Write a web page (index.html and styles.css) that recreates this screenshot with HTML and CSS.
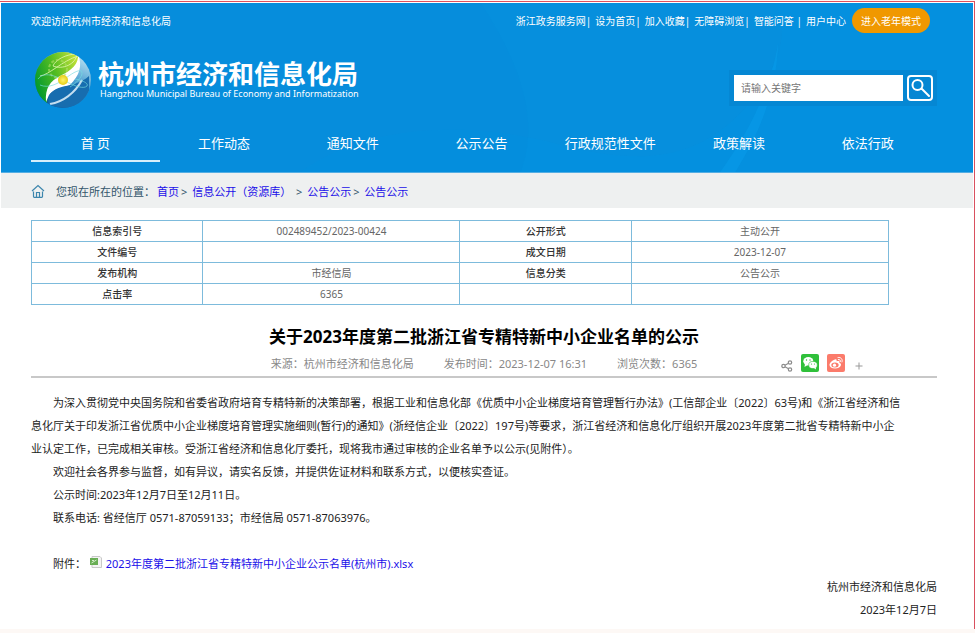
FILE: index.html
```html
<!DOCTYPE html>
<html lang="zh-CN">
<head>
<meta charset="utf-8">
<meta name="viewport" content="width=device-width, initial-scale=1">
<title>关于2023年度第二批浙江省专精特新中小企业名单的公示</title>
<link rel="stylesheet" href="styles.css">
</head>
<body>
<div class="page">
  <header class="header">
    <svg class="waves" viewBox="0 0 973 170" preserveAspectRatio="none" aria-hidden="true">
      <path d="M300 170C370 120 470 120 550 140C640 165 700 160 750 100C780 60 790 30 775 0H973V170Z" fill="#0096e6" opacity=".3"/>
      <path d="M0 0H480C520 60 540 120 520 170H0Z" fill="#058cda" opacity=".3"/>
      <path d="M720 170C745 135 770 90 778 40C776 90 760 130 735 170Z" fill="#0aa0ee" opacity=".4"/>
    </svg>
    <div class="topbar">
      <span>欢迎访问杭州市经济和信息化局</span>
      <div class="toplinks">
        <a href="#">浙江政务服务网</a><span class="bar">|</span>
        <a href="#">设为首页</a><span class="bar">|</span>
        <a href="#">加入收藏</a><span class="bar">|</span>
        <a href="#">无障碍浏览</a><span class="bar">|</span>
        <a href="#">智能问答</a><span class="bar">&nbsp;|</span>
        <a href="#">用户中心</a>
        <button class="elder" type="button">进入老年模式</button>
      </div>
    </div>
    <div class="brandrow">
      <a class="brand" href="#">
        <svg class="logo" viewBox="0 0 56 56" aria-hidden="true">
          <defs>
            <linearGradient id="green" x1="0" y1="0.5" x2="1" y2="0">
              <stop offset="0" stop-color="#079b2c"/><stop offset=".45" stop-color="#55bd22"/><stop offset="1" stop-color="#d5e83c"/>
            </linearGradient>
            <linearGradient id="blue" x1=".8" y1="0" x2=".3" y2="1">
              <stop offset="0" stop-color="#c5e8f6"/><stop offset=".45" stop-color="#4a9fd0"/><stop offset="1" stop-color="#07539b"/>
            </linearGradient>
            <radialGradient id="sun"><stop offset="0" stop-color="#fff36a"/><stop offset="1" stop-color="#e5cd16"/></radialGradient>
            <clipPath id="disc"><circle cx="28" cy="28" r="28"/></clipPath>
          </defs>
          <g clip-path="url(#disc)">
            <rect width="56" height="56" fill="url(#blue)"/>
            <path d="M0 0H43C45 12 38 19 27 25C18 30 12 36 12 54L0 56Z" fill="url(#green)"/>
            <path d="M43 2C48 14 44 24 35 33C28 36 19 36 14 43L11 50C10 36 15 29 25 24C37 18 44 12 43 2Z" fill="#fff"/>
            <path d="M14 44C22 30 38 38 54 24V45L38 57L13 54Z" fill="#176daf"/>
            <path d="M43 4C27 9 14 23 5 24M42 2C31 2 20 8 18 14C28 18 41 12 42 2" fill="none" stroke="#e6f7b4" opacity=".8"/>
            <path d="M15 52C28 50 40 41 47 28" fill="none" stroke="#e3f2fb" stroke-width="2" opacity=".85"/>
            <circle cx="23" cy="17" r="9" fill="none" stroke="#afe066" stroke-width="2" stroke-dasharray="3 2" opacity=".6"/>
            <path d="M3 27C9 19 21 24 30 29C41 35 49 37 52 34C54 31 46 28 40 27M5 33C14 37 24 31 31 26C40 19 46 17 47 20C48 25 40 32 35 35" fill="none" stroke="#77dce0" opacity=".65"/>
            <circle cx="28" cy="28" r="5" fill="url(#sun)"/>
          </g>
        </svg>
        <span class="names">
          <span class="cn">杭州市经济和信息化局</span>
          <span class="en">Hangzhou Municipal Bureau of Economy and Informatization</span>
        </span>
      </a>
      <form class="search">
        <input type="text" placeholder="请输入关键字" aria-label="请输入关键字">
        <button type="button" aria-label="搜索">
          <svg viewBox="0 0 26 26" aria-hidden="true"><rect x="1" y="1" width="24" height="24" rx="3"/><circle cx="10.500" cy="10" r="5"/><path d="M14.500 13.500L22 21" stroke-linecap="round"/></svg>
        </button>
      </form>
    </div>
    <nav class="nav">
      <a class="current" href="#">首 页</a>
      <a href="#">工作动态</a>
      <a href="#">通知文件</a>
      <a href="#">公示公告</a>
      <a href="#">行政规范性文件</a>
      <a href="#">政策解读</a>
      <a href="#">依法行政</a>
    </nav>
  </header>

  <div class="crumbs">
    <svg viewBox="0 0 14 14" aria-hidden="true"><path d="M1 7L7 1.500L13 7M2.500 7.500V12.500Q2.500 13.300 3.300 13.300H10.700Q11.500 13.300 11.500 12.500V7.500M5.500 13V8.500H8.500V13"/></svg>
    <p>您现在所在的位置：<a href="#">首页</a>&gt; <a href="#">信息公开（资源库）</a> &gt; <a href="#">公告公示</a>&gt; <a href="#">公告公示</a></p>
  </div>

  <main class="main">
    <table class="info">
      <colgroup><col class="key"><col class="val"><col class="key"><col class="val"></colgroup>
      <tr><th>信息索引号</th><td>002489452/2023-00424</td><th>公开形式</th><td>主动公开</td></tr>
      <tr><th>文件编号</th><td></td><th>成文日期</th><td>2023-12-07</td></tr>
      <tr><th>发布机构</th><td>市经信局</td><th>信息分类</th><td>公告公示</td></tr>
      <tr><th>点击率</th><td>6365</td><th></th><td></td></tr>
    </table>

    <article>
      <h1>关于2023年度第二批浙江省专精特新中小企业名单的公示</h1>
      <div class="meta">
        <div class="facts">
          <span>来源：杭州市经济和信息化局</span>
          <span>发布时间：2023-12-07 16:31</span>
          <span>浏览次数：6365</span>
        </div>
        <div class="share">
          <svg class="mini" viewBox="0 0 12 12" aria-hidden="true"><g fill="none" stroke="#8c8c8c" stroke-width="1.200"><circle cx="2.500" cy="6" r="1.700"/><circle cx="9" cy="2.500" r="1.700"/><circle cx="9" cy="9.500" r="1.700"/><path d="M4 5.200L7.500 3.300M4 6.800L7.500 8.700"/></g></svg>
          <a href="#" aria-label="微信"><svg viewBox="0 0 18 18" aria-hidden="true"><rect width="18" height="18" rx="2" fill="#2fc03a"/><ellipse cx="7.300" cy="7.300" rx="5" ry="4.200" fill="#fff"/><path d="M4 10L3.500 13L6.500 11Z" fill="#fff"/><ellipse cx="12" cy="11" rx="4.300" ry="3.600" fill="#fff" stroke="#2fc03a" stroke-width=".6"/><path d="M13 14L15 15.500L14.800 13Z" fill="#fff"/><g fill="#2fc03a"><circle cx="5.500" cy="6" r=".7"/><circle cx="9" cy="6" r=".7"/><circle cx="10.500" cy="10" r=".6"/><circle cx="13.500" cy="10" r=".6"/></g></svg></a>
          <a href="#" aria-label="微博"><svg viewBox="0 0 18 18" aria-hidden="true"><rect width="18" height="18" rx="2" fill="#fb7b6b"/><path d="M8 5.500C9.500 5 10 6 9.500 7.300C12 6.400 12.800 7.200 12.200 8.600C16 10 13.500 14.500 8.300 14.500C4.500 14.500 2.500 12.700 2.500 11C2.500 8.500 6 5.800 8 5.500Z" fill="#fff"/><ellipse cx="8" cy="11" rx="3.700" ry="2.500" fill="#fb7b6b"/><circle cx="7.500" cy="11.200" r="1.600" fill="#fff"/><path d="M11 3.500C14 2.800 16 5.500 15 8M11.300 5.500C13 5.200 13.800 6.500 13.300 7.700" fill="none" stroke="#fff" stroke-linecap="round"/></svg></a>
          <svg class="mini" viewBox="0 0 12 12" aria-hidden="true"><path d="M6 2.500V9.500M2.500 6H9.500" stroke="#999" fill="none"/></svg>
        </div>
      </div>
      <div class="content">
        <p>为深入贯彻党中央国务院和省委省政府培育专精特新的决策部署，根据工业和信息化部《优质中小企业梯度培育管理暂行办法》(工信部企业〔2022〕63号)和《浙江省经济和信<br>息化厅关于印发浙江省优质中小企业梯度培育管理实施细则(暂行)的通知》(浙经信企业〔2022〕197号)等要求，浙江省经济和信息化厅组织开展2023年度第二批省专精特新中小企<br>业认定工作，已完成相关审核。受浙江省经济和信息化厅委托，现将我市通过审核的企业名单予以公示(见附件）。</p>
        <p>欢迎社会各界参与监督，如有异议，请实名反馈，并提供佐证材料和联系方式，以便核实查证。</p>
        <p>公示时间:2023年12月7日至12月11日。</p>
        <p>联系电话: 省经信厅 0571-87059133；市经信局 0571-87063976。</p>
        <p class="attach">附件：
          <svg viewBox="0 0 12 12" aria-hidden="true"><path d="M2 .5H10L11.500 2V11.500H2Z" fill="#f4f4f4" stroke="#c9c9c9"/><rect y="2" width="8" height="7" fill="#69ae55"/><path d="M1.500 7L4 5.500L6.500 4M2 4.500H4" stroke="#d4edcb" fill="none"/></svg>
          <a href="#">2023年度第二批浙江省专精特新中小企业公示名单(杭州市).xlsx</a></p>
        <p class="sign">杭州市经济和信息化局</p>
        <p class="sign">2023年12月7日</p>
      </div>
    </article>
  </main>
</div>
</body>
</html>
```

FILE: styles.css
```css
* {
  box-sizing: border-box;
}

body {
  margin: 0;
  padding: 1px 0 5px;
  background: #fdf8f5;
  font-family: "Noto Sans", "Noto Sans CJK SC", sans-serif;
  font-size: 11px;
  color: #222;
}

p,
h1 {
  margin: 0;
}

a {
  color: #1a0fe8;
  text-decoration: none;
}

button,
input {
  font-family: inherit;
}

.page {
  padding: 1px 1px 8px;
  background: #fff;
  border-top: 1px solid #e0525c;
  border-right: 1px solid #d9505f;
}

/* Header */
.header {
  position: relative;
  padding: 0 36px 10px 30px;
  background: #068fdd;
  border-bottom: 1px solid #54aee3;
  color: #fff;
}

.header a {
  color: #fff;
}

.waves {
  position: absolute;
  inset: 0;
  width: 100%;
  height: 100%;
}

.topbar,
.brandrow,
.nav {
  position: relative;
  display: flex;
}

.topbar {
  align-items: center;
  justify-content: space-between;
  height: 35px;
  font-size: 10px;
}

.toplinks {
  display: flex;
  align-items: center;
  padding-right: 7px;
}

.bar {
  padding-right: 4px;
}

.elder {
  height: 25px;
  margin-left: 6px;
  padding: 0 9px;
  border: 0;
  border-radius: 13px;
  background: #f09800;
  color: #fff;
  font-size: 10px;
}

.brandrow {
  justify-content: space-between;
  padding: 14px 0 18px;
}

.brand {
  display: flex;
  align-items: center;
  gap: 7px;
  padding-left: 4px;
}

.logo {
  width: 56px;
  height: 56px;
}

.names {
  display: flex;
  flex-direction: column;
  padding-bottom: 2px;
}

.cn {
  font-size: 26px;
  line-height: 29px;
  font-weight: 700;
}

.en {
  padding-left: 2px;
  font-size: 9px;
  line-height: 10px;
}

.search {
  display: flex;
  align-self: flex-end;
  gap: 4px;
  margin-bottom: 2px;
  padding: 5px 4px 5px 5px;
  background: #0587d3;
}

.search input {
  width: 169px;
  height: 26px;
  padding: 0 7px;
  border: 0;
  background: #fff;
  font-size: 10px;
}

.search input::placeholder {
  color: #757575;
}

.search button {
  width: 26px;
  height: 26px;
  padding: 0;
  border: 0;
  background: none;
}

.search svg {
  display: block;
  fill: none;
  stroke: #fff;
  stroke-width: 2;
}

.nav {
  padding-right: 5px;
}

.nav a {
  flex: 1;
  height: 36px;
  border-bottom: 2px solid transparent;
  font-size: 13px;
  line-height: 34px;
  text-align: center;
}

.nav .current {
  border-bottom-color: #d5eefb;
}

/* Breadcrumbs */
.crumbs {
  display: flex;
  align-items: center;
  gap: 11px;
  height: 35px;
  padding: 0 30px;
  background: #eef0f0;
  color: #33566b;
}

.crumbs svg {
  width: 14px;
  height: 14px;
  fill: none;
  stroke: #3d86ad;
  stroke-width: 1.2;
}

.crumbs a {
  padding: 0 2px;
}

/* Main column */
.main {
  padding: 12px 36px 0 30px;
}

.info {
  width: calc(100% - 48px);
  table-layout: fixed;
  border-collapse: collapse;
  font-size: 10px;
}

.key {
  width: 20%;
}

.val {
  width: 30%;
}

.info th,
.info td {
  height: 21px;
  padding: 0;
  border: 1px solid #7dbbdc;
  line-height: 18px;
  text-align: center;
}

.info th {
  color: #333;
  font-weight: 500;
}

.info td {
  color: #666;
}

h1 {
  margin-top: 19px;
  color: #000;
  font-size: 17px;
  line-height: 26px;
  text-align: center;
}

.meta {
  display: grid;
  grid-template-columns: 1fr auto 1fr;
  align-items: center;
  height: 28px;
  border-bottom: 2px solid #c8c8c8;
  color: #888;
}

.facts {
  display: flex;
  grid-column: 2;
  gap: 30px;
}

.share {
  display: flex;
  align-items: center;
  justify-content: flex-end;
  gap: 8px;
  padding-right: 72px;
}

.share svg {
  display: block;
  width: 18px;
  height: 18px;
}

.share .mini {
  align-self: flex-end;
  width: 12px;
  height: 12px;
}

.content {
  padding-top: 13px;
  line-height: 23px;
}

.content p {
  text-indent: 2em;
}

.content .attach {
  margin-top: 23px;
}

.attach svg {
  width: 12px;
  height: 12px;
  margin: 0 1px;
}

.content .sign {
  text-align: right;
}
```
